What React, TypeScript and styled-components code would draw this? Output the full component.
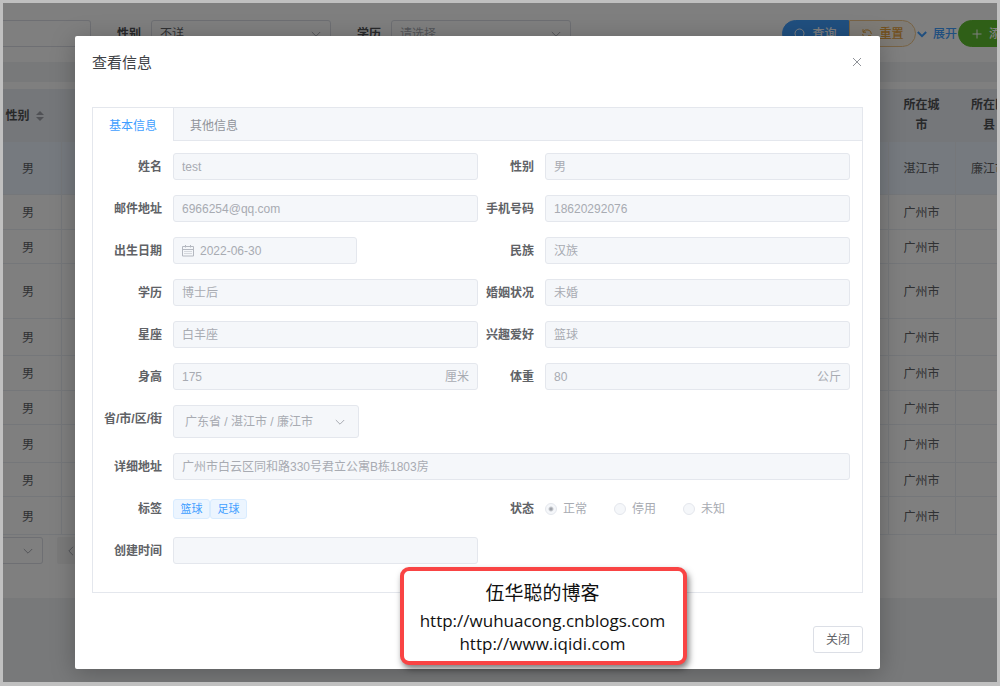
import React, { useId } from "react";
import styled, { createGlobalStyle, css } from "styled-components";

const sans = `"Liberation Sans", "Noto Sans CJK SC", sans-serif`;

const GlobalStyle = createGlobalStyle`
  *, *::before, *::after { box-sizing: border-box; }
  body { margin: 0; font: 12px/20px ${sans}; color: #606266; }
  button, input, select { font: inherit; margin: 0; }
`;

/* ---------- page frame ---------- */

const Frame = styled.div`
  display: grid;
  grid-template-columns: minmax(0, 1fr);
  min-height: 100vh;
  border: 3px solid #c0c0c0;
  border-bottom-width: 4px;
  overflow: hidden;
`;

const ListPage = styled.main`
  grid-area: 1 / 1;
  background: #f0f2f5;
  overflow: hidden;
`;

const Mask = styled.div`
  grid-area: 1 / 1;
  position: relative;
  padding: 33px 117px 13px 72px;
  background: rgba(0, 0, 0, 0.5);
`;

/* ---------- list page ---------- */

const Toolbar = styled.form`
  display: flex;
  align-items: flex-start;
  height: 59px;
  padding-top: 17px;
  background: #fff;
`;

const BarLabel = styled.label`
  margin: 0 10px 0 26px;
  line-height: 28px;
  font-weight: 700;
  color: #505256;
`;

const BarInput = styled.input`
  width: 88px;
  height: 27px;
  border: 1px solid #dcdfe6;
  border-left: 0;
  border-radius: 0 3px 3px 0;
`;

const PickerBox = styled.span<{ $width: number }>`
  display: flex;
  align-items: center;
  position: relative;
  width: ${(p) => p.$width}px;

  svg {
    position: absolute;
    right: 10px;
    pointer-events: none;
  }
`;

const Picker = styled.select<{ $muted?: boolean }>`
  appearance: none;
  width: 100%;
  height: 27px;
  padding: 0 24px 0 8px;
  border: 1px solid #dcdfe6;
  border-radius: 3px;
  background: #fff;
  color: ${(p) => (p.$muted ? "#a8abb2" : "#606266")};
`;

const Actions = styled.div`
  display: flex;
  margin: 0 -29px 0 auto;
`;

type Tone = "search" | "reset" | "toggle" | "add";

const tones: Record<Tone, ReturnType<typeof css>> = {
  search: css`
    width: 67px;
    background: #409eff;
    border-color: #409eff;
    border-radius: 14px 0 0 14px;
    color: #fff;
  `,
  reset: css`
    width: 67px;
    background: #fdf6ec;
    border-color: #f0c78a;
    border-radius: 0 14px 14px 0;
    color: #e6a23c;
  `,
  toggle: css`
    width: 42px;
    background: none;
    border-color: transparent;
    color: #409eff;
  `,
  add: css`
    width: 68px;
    background: #5fbf2f;
    border-color: #5fbf2f;
    border-radius: 14px;
    color: #fff;
  `,
};

const ActionButton = styled.button<{ $tone: Tone }>`
  display: flex;
  align-items: center;
  justify-content: center;
  gap: 6px;
  height: 27px;
  padding: 0;
  border: 1px solid;
  font-weight: 500;
  white-space: nowrap;
  ${(p) => tones[p.$tone]}
`;

const Card = styled.section`
  margin-top: 20px;
  padding: 7px 0 34px;
  background: #fff;
  overflow: hidden;
`;

const Table = styled.table`
  width: calc(100% + 27px);
  table-layout: fixed;
  border-collapse: separate;
  border-spacing: 0;
  text-align: center;
`;

const Col = styled.col<{ $width?: number }>`
  width: ${(p) => (p.$width ? `${p.$width}px` : "auto")};
`;

const HeadCell = styled.th<{ $first?: boolean }>`
  height: 53px;
  padding: ${(p) => (p.$first ? "0 16px 0 0" : "0 14px 2px 12px")};
  background: #ebeef5;
  color: #515355;
`;

const SortHead = styled.span`
  display: flex;
  align-items: center;
  justify-content: center;
  gap: 6px;
  white-space: nowrap;
`;

const Row = styled.tr<{ $height: number; $active?: boolean }>`
  height: ${(p) => p.$height}px;
  background: ${(p) => (p.$active ? "#ecf5ff" : "#fff")};
`;

const Cell = styled.td<{ $first?: boolean }>`
  padding: 2px ${(p) => (p.$first ? "8px" : "1px")} 0 0;
  border-right: 1px solid #ebeef5;
  border-bottom: 1px solid #ebeef5;
  white-space: nowrap;
`;

const Pager = styled.div`
  display: flex;
  gap: 14px;
  padding-top: 2px;
`;

const PagerPicker = styled(Picker)`
  border-left: 0;
  border-radius: 0 3px 3px 0;
`;

const PagerButton = styled.button`
  display: grid;
  place-items: center;
  width: 27px;
  height: 27px;
  padding: 0;
  border: 0;
  border-radius: 2px;
  background: #f4f4f5;
`;

/* ---------- dialog ---------- */

const Dialog = styled.section`
  padding: 16px 17px;
  background: #fff;
  border-radius: 2px;
  box-shadow: 0 4px 24px rgba(0, 0, 0, 0.25);
`;

const DialogHead = styled.header`
  display: flex;
  justify-content: space-between;
  align-items: flex-start;
  height: 55px;
`;

const Title = styled.h1`
  margin: 0;
  font-size: 15px;
  line-height: 22px;
  font-weight: 400;
  color: #404246;
`;

const IconButton = styled.button`
  display: grid;
  place-items: center;
  width: 12px;
  height: 20px;
  padding: 0;
  border: 0;
  background: none;
`;

const TabBox = styled.div`
  border: 1px solid #e4e7ed;
`;

const TabBar = styled.div`
  display: flex;
  height: 33px;
  background: #f5f7fa;
  box-shadow: inset 0 -1px #e4e7ed;
`;

const Tab = styled.button<{ $active?: boolean }>`
  padding: 2px 16px 0;
  border: 0;
  border-right: 1px solid ${(p) => (p.$active ? "#e4e7ed" : "transparent")};
  background: ${(p) => (p.$active ? "#fff" : "none")};
  color: ${(p) => (p.$active ? "#409eff" : "#909399")};
`;

const Form = styled.form`
  display: grid;
  grid-template-columns: 1fr 1fr;
  row-gap: 15px;
  padding: 12px 12px 28px 13px;
`;

const Item = styled.div<{ $wide?: boolean }>`
  display: grid;
  grid-template-columns: 67px minmax(0, 1fr);
  align-items: start;
  ${(p) => p.$wide && "grid-column: 1 / -1;"}
`;

const ItemLabel = styled.label`
  display: flex;
  justify-content: flex-end;
  height: 27px;
  padding-right: 11px;
  line-height: 29px;
  font-weight: 700;
  white-space: nowrap;
`;

const Shell = styled.div<{ $width?: number }>`
  display: flex;
  align-items: center;
  gap: 6px;
  width: ${(p) => (p.$width ? `${p.$width}px` : "100%")};
  height: 27px;
  padding: 0 8px;
  border: 1px solid #e4e7ed;
  border-radius: 3px;
  background: #f5f7fa;
  color: #a8abb2;
`;

const Input = styled.input`
  flex: 1;
  min-width: 0;
  padding: 0;
  border: 0;
  background: none;
  color: #a8abb2;
`;

const AreaPicker = styled.select`
  appearance: none;
  width: 100%;
  height: 33px;
  padding: 0 24px 0 11px;
  border: 1px solid #e4e7ed;
  border-radius: 3px;
  background: #f5f7fa;
  color: #a8abb2;
  opacity: 1;
`;

const AreaBox = styled(PickerBox)`
  svg {
    right: 14px;
  }
`;

const Inline = styled.div<{ $gap?: number }>`
  display: flex;
  align-items: center;
  gap: ${(p) => p.$gap ?? 0}px;
  height: 27px;
`;

const Tag = styled.span`
  width: 37px;
  height: 20px;
  border: 1px solid #d9ecff;
  border-radius: 3px;
  background: #ecf5ff;
  color: #409eff;
  font-size: 11px;
  line-height: 18px;
  text-align: center;
`;

const Choice = styled.label`
  display: flex;
  align-items: center;
  gap: 6px;
  color: #a8abb2;
`;

const Radio = styled.input`
  appearance: none;
  width: 12px;
  height: 12px;
  border: 1px solid #e4e7ed;
  border-radius: 50%;
  background: #f5f7fa;

  &:checked {
    background: radial-gradient(circle, #a0a3aa 1px, #f5f7fa 3px);
  }
`;

const DialogFoot = styled.footer`
  display: flex;
  justify-content: flex-end;
  padding-top: 33px;
`;

const CloseButton = styled.button`
  width: 50px;
  height: 27px;
  padding: 0;
  border: 1px solid #dcdfe6;
  border-radius: 3px;
  background: #fff;
  color: #606266;
`;

const Signature = styled.aside`
  position: absolute;
  right: 310px;
  bottom: 17px;
  width: 287px;
  height: 98px;
  padding: 8px 2px 0 0;
  border: 4px solid #f94444;
  border-radius: 9px;
  background: #fff;
  box-shadow: 2px 4px 6px rgba(0, 0, 0, 0.5);
  color: #111;
  font-family: "Open Sans", "Noto Sans CJK SC", sans-serif;
  font-size: 17px;
  line-height: 23px;
  text-align: center;
`;

const SignatureName = styled.p`
  margin: 0 0 2px;
  font-size: 19px;
  line-height: 28px;
`;

const SignatureLink = styled.a`
  display: block;
  color: inherit;
  text-decoration: none;
`;

/* ---------- icons ---------- */

const Chevron = ({ dir = "down", color = "#a8abb2", width = 1 }: { dir?: "down" | "left"; color?: string; width?: number }) => (
  <svg width="10" height="10" viewBox="0 0 10 10" fill="none" stroke={color} strokeWidth={width} aria-hidden="true">
    <path d={dir === "down" ? "M.8 3L5 7.2 9.2 3" : "M7 .8L2.8 5 7 9.2"} />
  </svg>
);

const SearchIcon = () => (
  <svg width="12" height="12" viewBox="0 0 12 12" fill="none" stroke="currentColor" aria-hidden="true">
    <circle cx="5.5" cy="5.5" r="4.5" />
    <path d="M9 9l2.5 2.5" />
  </svg>
);

const ResetIcon = () => (
  <svg width="12" height="12" viewBox="0 0 12 12" fill="none" stroke="currentColor" aria-hidden="true">
    <path d="M2 1.2v3h3M2.2 4A4.4 4.4 0 0 1 10.4 6M10 10.8v-3H7M9.8 8A4.4 4.4 0 0 1 1.6 6" />
  </svg>
);

const PlusIcon = () => (
  <svg width="12" height="12" viewBox="0 0 12 12" fill="none" stroke="currentColor" aria-hidden="true">
    <path d="M6 1.5v9M1.5 6h9" />
  </svg>
);

const CrossIcon = () => (
  <svg width="10" height="10" viewBox="0 0 10 10" fill="none" stroke="#909399" aria-hidden="true">
    <path d="M1 1l8 8M9 1L1 9" />
  </svg>
);

const SortIcon = () => (
  <svg width="8" height="10" viewBox="0 0 8 10" fill="#a0a3aa" aria-hidden="true">
    <path d="M0 4l4-4 4 4zM0 6l4 4 4-4z" />
  </svg>
);

const CalendarIcon = () => (
  <svg width="12" height="12" viewBox="0 0 12 12" fill="none" stroke="#b4b8c0" aria-hidden="true">
    <path d="M.5 1.5h11v9.500H.5zM.5 4.500h11M3.500 0v2.500M8.500 0v2.500" />
    <path d="M2.500 6.500h7M2.500 8.500h7" strokeDasharray="1 1" />
  </svg>
);

/* ---------- data ---------- */

const rows = [
  { height: 53, city: "湛江市", county: "廉江市", active: true },
  { height: 35, city: "广州市" },
  { height: 34, city: "广州市" },
  { height: 55, city: "广州市" },
  { height: 37, city: "广州市" },
  { height: 35, city: "广州市" },
  { height: 34, city: "广州市" },
  { height: 38, city: "广州市" },
  { height: 34, city: "广州市" },
  { height: 38, city: "广州市" },
];

type FieldProps = {
  label: string;
  value?: string;
  unit?: string;
  icon?: React.ReactNode;
  width?: number;
  wide?: boolean;
};

function Field({ label, value = "", unit, icon, width, wide }: FieldProps) {
  const id = useId();
  return (
    <Item $wide={wide}>
      <ItemLabel htmlFor={id}>{label}</ItemLabel>
      <Shell $width={width}>
        {icon}
        <Input id={id} value={value} disabled readOnly />
        {unit && <span>{unit}</span>}
      </Shell>
    </Item>
  );
}

function List() {
  return (
    <ListPage>
      <Toolbar>
        <BarInput aria-label="姓名" />
        <BarLabel htmlFor="q-gender">性别</BarLabel>
        <PickerBox $width={180}>
          <Picker id="q-gender">
            <option>不详</option>
          </Picker>
          <Chevron />
        </PickerBox>
        <BarLabel htmlFor="q-degree">学历</BarLabel>
        <PickerBox $width={180}>
          <Picker id="q-degree" $muted>
            <option>请选择</option>
          </Picker>
          <Chevron />
        </PickerBox>
        <Actions>
          <ActionButton type="button" $tone="search"><SearchIcon />查询</ActionButton>
          <ActionButton type="button" $tone="reset"><ResetIcon />重置</ActionButton>
          <ActionButton type="button" $tone="toggle"><Chevron color="#409eff" width={2} />展开</ActionButton>
          <ActionButton type="button" $tone="add"><PlusIcon />添加</ActionButton>
        </Actions>
      </Toolbar>
      <Card>
        <Table>
          <colgroup>
            <Col $width={59} />
            <Col />
            <Col $width={67} />
            <Col $width={68} />
          </colgroup>
          <thead>
            <tr>
              <HeadCell $first><SortHead>性别<SortIcon /></SortHead></HeadCell>
              <HeadCell />
              <HeadCell>所在城市</HeadCell>
              <HeadCell>所在区县</HeadCell>
            </tr>
          </thead>
          <tbody>
            {rows.map((r, i) => (
              <Row key={i} $height={r.height} $active={r.active}>
                <Cell $first>男</Cell>
                <Cell />
                <Cell>{r.city}</Cell>
                <Cell>{r.county}</Cell>
              </Row>
            ))}
          </tbody>
        </Table>
        <Pager>
          <PickerBox $width={40}>
            <PagerPicker aria-label="每页条数" />
            <Chevron />
          </PickerBox>
          <PagerButton type="button" aria-label="上一页"><Chevron dir="left" /></PagerButton>
        </Pager>
      </Card>
    </ListPage>
  );
}

export default function App() {
  return (
    <>
      <GlobalStyle />
      <Frame>
        <List />
        <Mask>
          <Dialog role="dialog" aria-labelledby="dialog-title">
            <DialogHead>
              <Title id="dialog-title">查看信息</Title>
              <IconButton type="button" aria-label="关闭"><CrossIcon /></IconButton>
            </DialogHead>
            <TabBox>
              <TabBar role="tablist">
                <Tab type="button" role="tab" aria-selected $active>基本信息</Tab>
                <Tab type="button" role="tab">其他信息</Tab>
              </TabBar>
              <Form>
                <Field label="姓名" value="test" />
                <Field label="性别" value="男" />
                <Field label="邮件地址" value="6966254@qq.com" />
                <Field label="手机号码" value="18620292076" />
                <Field label="出生日期" value="2022-06-30" icon={<CalendarIcon />} width={184} />
                <Field label="民族" value="汉族" />
                <Field label="学历" value="博士后" />
                <Field label="婚姻状况" value="未婚" />
                <Field label="星座" value="白羊座" />
                <Field label="兴趣爱好" value="篮球" />
                <Field label="身高" value="175" unit="厘米" />
                <Field label="体重" value="80" unit="公斤" />
                <Item $wide>
                  <ItemLabel htmlFor="area">省/市/区/街</ItemLabel>
                  <AreaBox $width={186}>
                    <AreaPicker id="area" disabled>
                      <option>广东省 / 湛江市 / 廉江市</option>
                    </AreaPicker>
                    <Chevron />
                  </AreaBox>
                </Item>
                <Field label="详细地址" value="广州市白云区同和路330号君立公寓B栋1803房" wide />
                <Item>
                  <ItemLabel as="span">标签</ItemLabel>
                  <Inline>
                    <Tag>篮球</Tag>
                    <Tag>足球</Tag>
                  </Inline>
                </Item>
                <Item role="radiogroup" aria-label="状态">
                  <ItemLabel as="span">状态</ItemLabel>
                  <Inline $gap={27}>
                    {["正常", "停用", "未知"].map((t, i) => (
                      <Choice key={t}>
                        <Radio type="radio" name="status" defaultChecked={i === 0} disabled />
                        {t}
                      </Choice>
                    ))}
                  </Inline>
                </Item>
                <Field label="创建时间" />
              </Form>
            </TabBox>
            <DialogFoot>
              <CloseButton type="button">关闭</CloseButton>
            </DialogFoot>
          </Dialog>
          <Signature>
            <SignatureName>伍华聪的博客</SignatureName>
            <SignatureLink href="http://wuhuacong.cnblogs.com">http://wuhuacong.cnblogs.com</SignatureLink>
            <SignatureLink href="http://www.iqidi.com">http://www.iqidi.com</SignatureLink>
          </Signature>
        </Mask>
      </Frame>
    </>
  );
}
